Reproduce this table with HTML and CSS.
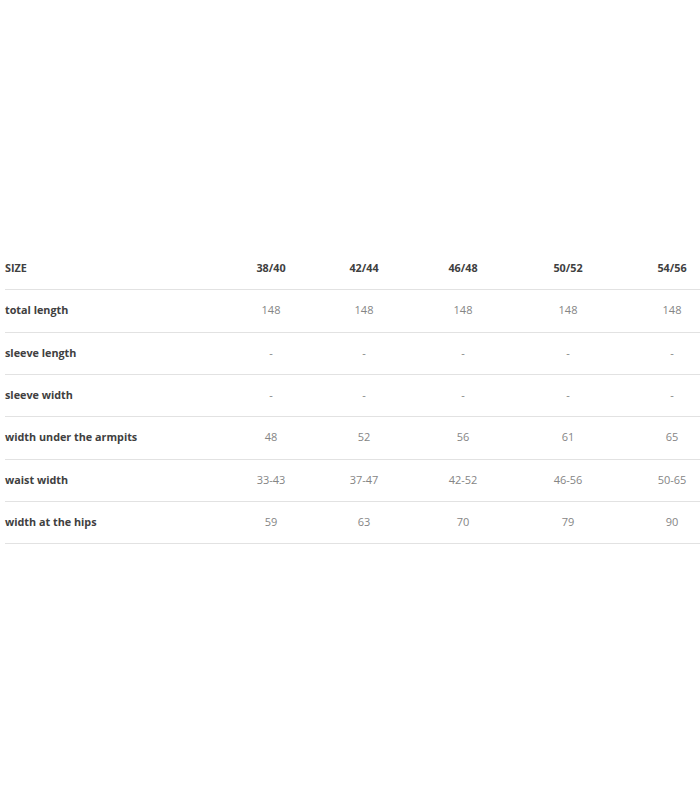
FILE: index.html
```html
<!DOCTYPE html>
<html>
<head>
<meta charset="utf-8">
<link rel="stylesheet" href="styles.css">
</head>
<body>
<div class="wrap">
  <div class="table">
    <div class="row head">
      <div class="label">SIZE</div><div class="cell">38/40</div><div class="cell">42/44</div><div class="cell">46/48</div><div class="cell">50/52</div><div class="cell">54/56</div>
    </div>
    <div class="row">
      <div class="label">total length</div><div class="cell">148</div><div class="cell">148</div><div class="cell">148</div><div class="cell">148</div><div class="cell">148</div>
    </div>
    <div class="row">
      <div class="label">sleeve length</div><div class="cell">-</div><div class="cell">-</div><div class="cell">-</div><div class="cell">-</div><div class="cell">-</div>
    </div>
    <div class="row">
      <div class="label">sleeve width</div><div class="cell">-</div><div class="cell">-</div><div class="cell">-</div><div class="cell">-</div><div class="cell">-</div>
    </div>
    <div class="row">
      <div class="label">width under the armpits</div><div class="cell">48</div><div class="cell">52</div><div class="cell">56</div><div class="cell">61</div><div class="cell">65</div>
    </div>
    <div class="row">
      <div class="label">waist width</div><div class="cell">33-43</div><div class="cell">37-47</div><div class="cell">42-52</div><div class="cell">46-56</div><div class="cell">50-65</div>
    </div>
    <div class="row">
      <div class="label">width at the hips</div><div class="cell">59</div><div class="cell">63</div><div class="cell">70</div><div class="cell">79</div><div class="cell">90</div>
    </div>
  </div>
</div>
</body>
</html>
```

FILE: styles.css
```css
html, body {
  margin: 0;
  padding: 0;
  background: #ffffff;
  overflow: hidden;
}
body {
  font-family: "Open Sans", "Liberation Sans", sans-serif;
  font-size: 11px;
}
.wrap {
  padding: 248px 0 0 5px;
  width: 695px;
  overflow: hidden;
}
.table {
  width: 718px;
}
.row {
  display: grid;
  grid-template-columns: 220px 92px 94px 104px 106px 102px;
  height: 42.33px;
  box-sizing: border-box;
  padding-bottom: 2px;
  border-bottom: 1px solid #e2e2e2;
  align-items: center;
}
.label {
  font-weight: 700;
  font-size: 10.8px;
  color: #404040;
}
.cell {
  text-align: center;
  color: #858585;
}
.head .cell {
  font-weight: 700;
  font-size: 10.8px;
  color: #404040;
}
```
